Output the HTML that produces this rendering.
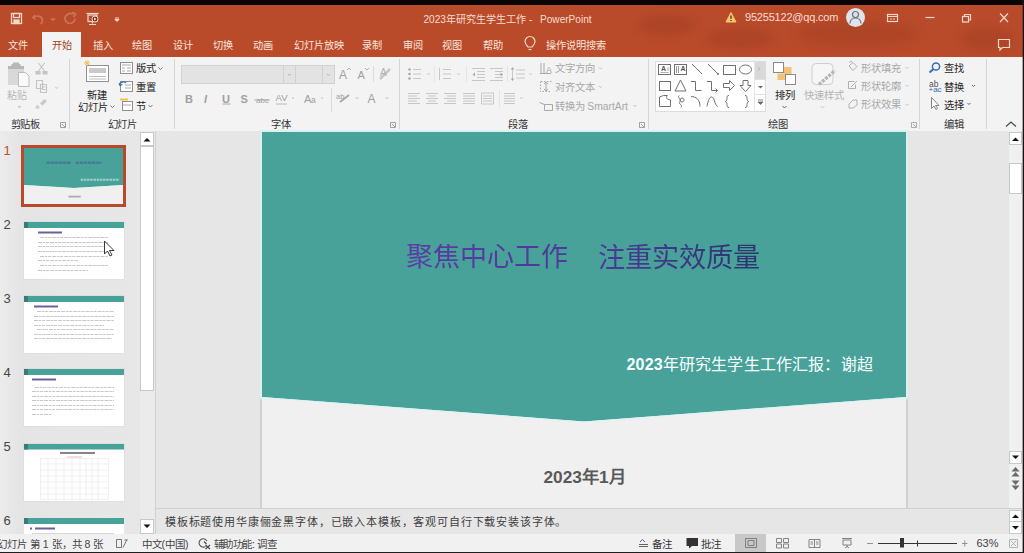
<!DOCTYPE html>
<html lang="zh-CN">
<head>
<meta charset="utf-8">
<style>
*{box-sizing:border-box;margin:0;padding:0}
html,body{width:1024px;height:553px;overflow:hidden}
body{position:relative;background:#e6e6e6;font-family:"Liberation Sans",sans-serif;color:#262626}
.a{position:absolute}
.t{position:absolute;white-space:nowrap;line-height:1}
svg{position:absolute;overflow:visible}
/* title bar */
#blk{left:0;top:0;width:1024px;height:5px;background:#0a0505}
#org{left:0;top:5px;width:1024px;height:52px;background:#b94b2b}
.tb{color:#f7dccf;font-size:10.1px}
.tab{color:#fbe6dc;font-size:10.2px;top:41px}
/* ribbon */
#rib{left:0;top:57px;width:1024px;height:74px;background:#f3f3f3}
.rsep{position:absolute;top:59px;width:1px;height:70px;background:#d6d6d6}
.lbl{font-size:10.3px;color:#333;top:120px}
.rt{font-size:10.3px;color:#262626}
.dim{color:#a8a8a8}
.dd{position:absolute;width:5px;height:3px}
</style>
</head>
<body>
<div class="a" id="blk"></div>
<div class="a" id="org"></div>
<div class="a" style="left:0;top:5px;width:1022px;height:52px;overflow:hidden">
<div class="a" style="left:637px;top:9px;width:60px;height:22px;border-radius:50%;background:#9a3a20;opacity:.35;filter:blur(5px)"></div>
<div class="a" style="left:705px;top:22px;width:70px;height:22px;border-radius:50%;background:#9a3a20;opacity:.35;filter:blur(5px)"></div>
<div class="a" style="left:795px;top:16px;width:125px;height:26px;border-radius:50%;background:#9a3a20;opacity:.35;filter:blur(6px)"></div>
<div class="a" style="left:960px;top:22px;width:55px;height:24px;border-radius:50%;background:#9a3a20;opacity:.35;filter:blur(5px)"></div>
</div>

<!-- quick access -->
<svg style="left:0;top:0" width="130" height="32">
  <g fill="none" stroke="#f6d8cb" stroke-width="1.3">
    <rect x="11.5" y="13.5" width="10" height="10"/>
    <rect x="13.5" y="13.5" width="6" height="4"/>
    <rect x="14" y="20" width="5" height="3.5" fill="#f6d8cb"/>
  </g>
  <g fill="none" stroke="#c97558" stroke-width="1.7">
    <path d="M35 15 l-2 2.5 l2.5 1.5 M33.5 17.5 c4-3 9-1 9 3 c0 2-1 3-2 3.5"/>
    <path d="M51 18.5 l2 1.5 l2-1.5"/>
    <path d="M73 14 c-4-2-8 1-8 4.5 c0 3 2.5 5 5 5 c3 0 5-2.5 5-5 M72 12.5 l3.5 1.5 l-2 3"/>
  </g>
  <g fill="none" stroke="#f6d8cb" stroke-width="1.2">
    <path d="M86.5 13.5 h12"/>
    <rect x="88" y="15" width="9" height="6.5"/>
    <path d="M92.5 21.5 v2 M89 24.5 h7"/>
    <circle cx="95" cy="19" r="3" fill="#7a3018" stroke="#f6d8cb" stroke-width="1"/><path d="M94.2 17.6 l2.2 1.4 l-2.2 1.4 z" fill="#fff" stroke="none"/>
  </g>
  <path d="M115 18 h4 M115 19.5 l2 2 l2-2 z" stroke="#f6d8cb" stroke-width="1" fill="#f6d8cb"/>
</svg>

<div class="t tb" style="left:423.5px;top:14.5px">2023年研究生学生工作</div><div class="t tb" style="left:529px;top:14.5px">-</div><div class="t tb" style="left:540px;top:14.5px">PowerPoint</div>
<svg style="left:0;top:0" width="1024" height="32">
  <path d="M731 12.5 l5 9.5 h-10 z" fill="#f3c66a" stroke="#f3c66a" stroke-width="1" stroke-linejoin="round"/>
  <path d="M731 15.5 v3.3 M731 20 v0.9" stroke="#3a2a10" stroke-width="1.2"/>
  <circle cx="855.5" cy="17.5" r="9.5" fill="#dfe3ea"/>
  <circle cx="855.5" cy="14.5" r="3" fill="none" stroke="#6b7280" stroke-width="1.2"/>
  <path d="M850 23.5 c0-3.5 2.5-5.5 5.5-5.5 s5.5 2 5.5 5.5" fill="none" stroke="#6b7280" stroke-width="1.2"/>
  <g fill="none" stroke="#f6d8cb" stroke-width="1.2">
    <rect x="887.5" y="14.5" width="10" height="7"/>
    <path d="M887.5 16.5 h10 M890 19 h2 M893 19 h2"/>
    <path d="M925.5 17.5 h9"/>
    <rect x="962.5" y="16.5" width="6" height="5.5"/>
    <path d="M964.5 16.5 v-2 h6 v5.5 h-1.8"/>
    <path d="M1000 13.5 l8 8.5 M1008 13.5 l-8 8.5"/>
  </g>
</svg>
<div class="t tb" style="left:745px;top:11.5px;font-size:11px;letter-spacing:-0.2px">95255122@qq.com</div>

<!-- tabs -->
<div class="a" style="left:42px;top:32px;width:39px;height:25px;background:#f3f3f3"></div>
<div class="t tab" style="left:7.5px">文件</div>
<div class="t tab" style="left:52px;color:#a23f24">开始</div>
<div class="t tab" style="left:92.5px">插入</div>
<div class="t tab" style="left:132px">绘图</div>
<div class="t tab" style="left:172.5px">设计</div>
<div class="t tab" style="left:212.5px">切换</div>
<div class="t tab" style="left:253px">动画</div>
<div class="t tab" style="left:293.5px">幻灯片放映</div>
<div class="t tab" style="left:362px">录制</div>
<div class="t tab" style="left:402.5px">审阅</div>
<div class="t tab" style="left:442px">视图</div>
<div class="t tab" style="left:483px">帮助</div>
<svg style="left:0;top:0" width="1024" height="57">
  <g fill="none" stroke="#f6d8cb" stroke-width="1.2">
    <path d="M528 47 c-2-2-3-3.5-3-5.5 a5 5 0 0 1 10 0 c0 2-1 3.5-3 5.5 z"/>
    <path d="M528.5 49.5 h3"/>
    <path d="M998.5 39.5 h11 v8 h-7 l-2.5 2.5 v-2.5 h-1.5 z"/>
  </g>
</svg>
<div class="t tab" style="left:546px">操作说明搜索</div>

<!-- ribbon -->
<div class="a" id="rib"></div>

<!-- separators -->
<div class="rsep" style="left:69px"></div>
<div class="rsep" style="left:174px"></div>
<div class="rsep" style="left:399px"></div>
<div class="rsep" style="left:648px"></div>
<div class="rsep" style="left:919px"></div>
<div class="rsep" style="left:986px"></div>

<!-- clipboard -->
<svg style="left:0;top:0" width="70" height="131">
  <rect x="8" y="68" width="16" height="17" fill="#d9d9d9"/>
  <path d="M8 69 h16 v-3 h-3.5 v-2 h-1.5 v-1.5 h-6 v1.5 h-1.5 v2 h-3.5 z" fill="#b8b8b8"/>
  <path d="M18.5 72.5 h7 l3.5 3.5 v10.5 h-10.5 z" fill="#fafafa" stroke="#bdbdbd" stroke-width="1"/>
  <g fill="none" stroke="#c4c4c4" stroke-width="1.1">
    <path d="M38.5 63 l6 8 M44.5 63 l-6 8"/>
    <path d="M36 71.5 h4 v2.5 h-4 z M43 71.5 h4 v2.5 h-4 z" fill="#c4c4c4"/>
    <path d="M36.5 80.5 h6 v8 h-6 z M40.5 84.5 h6 v8 h-6 z M42 87 h3.5 M42 89.5 h3.5" fill="#f3f3f3"/>
    <path d="M55 87 l1.5 1.5 l1.5-1.5" stroke="#d6d6d6"/>
    <path d="M18 106 l1.5 1.5 l1.5-1.5" stroke="#c8c8c8"/>
  </g>
  <g fill="#c8c8c8"><path d="M44.5 99 l2.5 2 l-4.5 4.5 l-2.5-2 z"/><path d="M37 104.5 l3 2.5 l-1.5 2 l-3.5-1 z" fill="#d0d0d0"/></g>
  <path d="M60.5 122.5 h5 v5 h-5 z M62 124 l3 3" fill="none" stroke="#8a8a8a" stroke-width="0.8"/>
</svg>
<div class="t rt dim" style="left:6.5px;top:90.5px;font-size:10px;color:#b8b8b8">粘贴</div>
<div class="t lbl" style="left:10.5px;letter-spacing:-0.5px">剪贴板</div>

<!-- slides -->
<svg style="left:0;top:0" width="175" height="131">
  <rect x="86.5" y="65.5" width="22" height="16" fill="#fff" stroke="#8f8f8f"/>
  <rect x="89" y="68" width="17" height="5" fill="#c9c9c9"/>
  <path d="M89 76.5 h17 M89 79 h17" stroke="#bcbcbc"/>
  <path d="M87 60 v6 M84 63 h6 M85 61 l4 4 M89 61 l-4 4" stroke="#f2c14e" stroke-width="1"/>
  <path d="M110.5 105.5 l2 2 l2-2" fill="none" stroke="#666" stroke-width="0.9"/>
  <g fill="#fff" stroke="#8f8f8f">
    <rect x="120.5" y="62.5" width="12" height="11"/>
    <rect x="120.5" y="81.5" width="12" height="10"/>
    <rect x="122.5" y="101.5" width="10" height="9"/>
  </g>
  <path d="M122 65 h9 M122 68 h3 M127 68 h4 M122 71 h3 M127 71 h4" stroke="#aaa"/>
  <path d="M120 85 c0-3 4-4 6-2 M119 83 l1 2.5 l2.5-1" fill="none" stroke="#3b6fb6" stroke-width="1.1"/>
  <path d="M125 85 h6 M125 88 h6" stroke="#aaa"/>
  <path d="M120 99.5 h8" stroke="#f2c14e" stroke-width="2"/>
  <path d="M123 105 h8" stroke="#aaa"/>
  <path d="M158.5 67.5 l2 2 l2-2 M148.5 105 l2 2 l2-2" fill="none" stroke="#666" stroke-width="0.9"/>
</svg>
<div class="t rt" style="left:87px;top:90.5px">新建</div>
<div class="t rt" style="left:77.5px;top:103px">幻灯片</div>
<div class="t rt" style="left:135.5px;top:64px">版式</div>
<div class="t rt" style="left:135.5px;top:83px">重置</div>
<div class="t rt" style="left:135.5px;top:102px">节</div>
<div class="t lbl" style="left:107.5px;letter-spacing:-0.5px">幻灯片</div>

<!-- font -->
<div class="a" style="left:181px;top:65px;width:154px;height:19px;background:#e3e3e3;border:1px solid #d2d2d2"></div>
<div class="a" style="left:283px;top:65px;width:1px;height:19px;background:#d2d2d2"></div>
<div class="a" style="left:295px;top:65px;width:1px;height:19px;background:#d2d2d2"></div>
<div class="a" style="left:322px;top:65px;width:1px;height:19px;background:#d2d2d2"></div>
<svg style="left:0;top:0" width="400" height="131">
  <g fill="none" stroke="#b0b0b0" stroke-width="0.9">
    <path d="M288 74 l1.5 1.5 l1.5-1.5 M327 74 l1.5 1.5 l1.5-1.5"/>
  </g>
  <g fill="#a0a0a0" font-family="Liberation Sans" >
    <text x="185" y="102.5" font-size="11" font-weight="bold">B</text>
    <text x="204" y="102.5" font-size="11" font-style="italic" font-weight="bold">I</text>
    <text x="222" y="102.5" font-size="11" font-weight="bold">U</text>
    <text x="240.5" y="102.5" font-size="11" font-weight="bold">S</text>
    <text x="256" y="102.5" font-size="8">abc</text>
    <text x="275.5" y="101" font-size="9.5">AV</text>
    <text x="304" y="102.5" font-size="11">A</text>
    <text x="311" y="102.5" font-size="8.5">a</text>
    <text x="339" y="79" font-size="12">A</text>
    <text x="357.5" y="79" font-size="11">A</text>
    <text x="367.5" y="103" font-size="12">A</text>
    <text x="336" y="99" font-size="7.5">ab</text>
  </g>
  <g fill="none" stroke="#a8a8a8" stroke-width="1">
    <path d="M222.5 104 h8"/>
    <path d="M254.5 100 h15"/>
    <path d="M276 104 h11" stroke-width="0.8"/>
    <path d="M347 70 l2-2 l2 2 M365 68 l2 2 l2-2" stroke-width="0.9"/>
    <path d="M340 102 l9-7" stroke-width="2"/>
    <path d="M380 79 l10-10" stroke-width="2.5" stroke="#c6c6c6"/>
    <path d="M292 98 h2 M321 98 h2 M355.5 98 h3 M385.5 98 h3" stroke="#c0c0c0"/>
  </g>
  <text x="380" y="76" font-size="10" fill="#b0b0b0" font-family="Liberation Sans">A</text>
  <path d="M373.5 66 v16 M331.5 88 v24" stroke="#dadada"/>
  <path d="M390.5 122.5 h5 v5 h-5 z M392 124 l3 3" fill="none" stroke="#8a8a8a" stroke-width="0.8"/>
</svg>
<div class="t lbl" style="left:270.5px">字体</div>

<!-- paragraph -->
<svg style="left:0;top:0" width="660" height="131">
  <g fill="#a8a8a8">
    <circle cx="409.5" cy="69.5" r="1.3"/><circle cx="409.5" cy="74" r="1.3"/><circle cx="409.5" cy="78.5" r="1.3"/>
  </g>
  <g stroke="#c2c2c2" stroke-width="0.9" fill="none">
    <path d="M413 69.5 h8 M413 74 h8 M413 78.5 h8"/>
    <path d="M439.5 68 v12 M443 69.5 h8 M443 74 h8 M443 78.5 h8"/>
    <path d="M472 68.5 h13 M477 71.5 h8 M477 74.5 h8 M477 77.5 h8 M472 80.5 h13"/>
    <path d="M490 68.5 h13 M495 71.5 h8 M495 74.5 h8 M495 77.5 h8 M490 80.5 h13"/>
    <path d="M516 70 h9 M516 74 h9 M516 78 h9 M512.5 68 v12"/>
    <path d="M427 74 h3 M457 74 h3 M529 74 h3" stroke="#c8c8c8"/>
    <path d="M408 93.5 h12 M408 96 h9 M408 98.5 h12 M408 101 h9 M408 103.5 h12"/>
    <path d="M426 93.5 h12 M428 96 h8 M426 98.5 h12 M428 101 h8 M426 103.5 h12"/>
    <path d="M444 93.5 h12 M447 96 h9 M444 98.5 h12 M447 101 h9 M444 103.5 h12"/>
    <path d="M463 93.5 h12 M463 96 h12 M463 98.5 h12 M463 101 h12 M463 103.5 h12"/>
    <path d="M481.5 93 h12 v11 h-12 z M483 96 h9 M483 98.5 h9 M483 101 h9"/>
    <path d="M504 93.5 h11 M504 96 h11 M504 98.5 h11 M504 101 h11 M504 103.5 h11"/>
    <path d="M520 98 h3" stroke="#c8c8c8"/>
  </g>
  <g fill="#a8a8a8"><path d="M472.5 74.5 l2.5-2 v4 z M503 74.5 l-2.5-2 v4 z"/><path d="M512.5 67 l-1.8 2.5 h3.6 z M512.5 81 l-1.8-2.5 h3.6 z"/></g>
  <path d="M434.5 66 v16 M466.5 66 v16 M507.5 66 v16 M499.5 90 v18" stroke="#e4e4e4"/>
  <g stroke="#a8a8a8" fill="none" stroke-width="1">
    <path d="M541 63 v10 M544 63 v10 M540 73.5 h11"/>
    <path d="M540.5 81.5 v10 h11 M551.5 81.5 h-11" stroke-dasharray="1.5 1.5"/>
    <path d="M546 82 v9 M544 84 l2-2 l2 2 M544 89 l2 2 l2-2"/>
    <path d="M544.5 104.5 h8 v6 h-8 z"/>
    <path d="M539.5 102.5 l5 2"/>
    <path d="M599 67.5 l1.5 1.5 l1.5-1.5 M599 86 l1.5 1.5 l1.5-1.5 M633.5 105 l1.5 1.5 l1.5-1.5" stroke="#c0c0c0"/>
  </g>
  <text x="546" y="72.5" font-size="9" fill="#a8a8a8" font-family="Liberation Sans">A</text>
  <path d="M639.5 122.5 h5 v5 h-5 z M641 124 l3 3" fill="none" stroke="#8a8a8a" stroke-width="0.8"/>
</svg>
<div class="t rt dim" style="left:554.5px;top:64px">文字方向</div>
<div class="t rt dim" style="left:554.5px;top:83px">对齐文本</div>
<div class="t rt dim" style="left:554.5px;top:101.5px">转换为 SmartArt</div>
<div class="t lbl" style="left:507.5px">段落</div>

<!-- drawing -->
<div class="a" style="left:655px;top:61px;width:111px;height:51px;background:#fff;border:1px solid #dcdcdc"></div>
<div class="a" style="left:754px;top:62px;width:11px;height:17px;background:#d9d9d9"></div>
<div class="a" style="left:754px;top:62px;width:1px;height:49px;background:#e6e6e6"></div>
<div class="a" style="left:755px;top:79px;width:10px;height:1px;background:#e0e0e0"></div>
<div class="a" style="left:755px;top:94px;width:10px;height:1px;background:#e0e0e0"></div>
<svg style="left:0;top:0" width="1024" height="131">
  <g fill="none" stroke="#707070" stroke-width="1">
    <rect x="658.5" y="64.5" width="12" height="10"/>
    <path d="M660.5 72.5 h8" stroke="#b0b0b0"/>
    <rect x="674.5" y="64.5" width="12" height="10"/>
    <path d="M676.5 66 v7 M678.5 66 v7" stroke="#999"/>
    <path d="M692 64 l10 10"/>
    <path d="M708 64 l10 10"/>
    <rect x="723.5" y="65.5" width="12" height="9"/>
    <ellipse cx="745.5" cy="69.5" rx="6" ry="4.5"/>
    <rect x="659.5" y="81.5" width="11" height="9"/>
    <path d="M680.5 80 l-5.5 11 h11 z"/>
    <path d="M691 81.5 h4.5 v9 h6"/>
    <path d="M707 81.5 h4.5 v9 h6 M715.5 88.5 l2 2 l-2 2"/>
    <path d="M723.5 83.5 h6 v-3 l5 5 l-5 5 v-3 h-6 z"/>
    <path d="M743 80.5 h5 v5 h3 l-5.5 6 l-5.5-6 h3 z"/>
    <path d="M659.5 97 l4-1.5 h4 c-2 2-1 4 3 4.5 v6.5 h-11 z"/>
    <path d="M679 95.5 c-2 3 3 3 1 6 c-2 3 3 3 1 6 M682 102 a2 2 0 1 1 0.1 0"/>
    <path d="M691 96.5 c5 0 9 3 9 10"/>
    <path d="M707 106.5 c2-12 6-12 8-4 c1 3 2 4 3 4"/>
    <path d="M729 95.5 c-2 0-2 1-2 3 c0 2-1 3-2 3 c1 0 2 1 2 3 c0 2 0 3 2 3"/>
    <path d="M745 95.5 c2 0 2 1 2 3 c0 2 1 3 2 3 c-1 0-2 1-2 3 c0 2 0 3-2 3"/>
  </g>
  <circle cx="718" cy="74" r="1" fill="#707070"/>
  <text x="661" y="71" font-size="7" fill="#555" font-family="Liberation Sans" font-weight="bold">A</text>
  <path d="M667 68 h2.5 M667 70 h2.5" stroke="#999" stroke-width="0.8"/>
  <text x="680.5" y="71" font-size="7" fill="#555" font-family="Liberation Sans" font-weight="bold">A</text>
  <path d="M758 67 l2 2 l-2 2" fill="none" stroke="#b0b0b0" stroke-width="0.8"/>
  <path d="M758 86 h5 l-2.5 2.5 z" fill="#6a6a6a"/>
  <path d="M758 100 h5 M758 102 h5 l-2.5 2.5 z" fill="#6a6a6a" stroke="#6a6a6a" stroke-width="0.8"/>
  <!-- arrange -->
  <rect x="784" y="67" width="7.5" height="7" fill="#f3c276"/>
  <rect x="777.5" y="73.5" width="7.5" height="6.5" fill="#f3c276"/>
  <rect x="773.5" y="62.5" width="10" height="10" fill="#fff" stroke="#8a8a8a"/>
  <rect x="785.5" y="74.5" width="10" height="10" fill="#fff" stroke="#8a8a8a"/>
  <path d="M782.5 106 l2 2 l2-2" fill="none" stroke="#555" stroke-width="0.9"/>
  <!-- quick styles -->
  <rect x="812" y="63.5" width="21" height="21" rx="4" fill="#f6f6f6" stroke="#cfcfcf"/>
  <path d="M819 84.5 l16-14" stroke="#b5b5b5" stroke-width="3.2" stroke-dasharray="3 1.2"/>
  <path d="M820.5 106 l2 2 l2-2" fill="none" stroke="#c6c6c6" stroke-width="0.9"/>
  <g fill="none" stroke="#b0b0b0" stroke-width="1">
    <path d="M849 66 l4-3.5 l4 4 l-4 4 z M849.5 63 c0-2 2-2 3-1"/>
    <path d="M848.5 81.5 h6 M848.5 81.5 v7 h7 v-4" />
    <path d="M851 87 l6-6"/>
    <path d="M849 104 l4-4 h4 v5 l-4 3 h-4 z"/>
    <path d="M905.5 67 l1.5 1.5 l1.5-1.5 M905.5 85 l1.5 1.5 l1.5-1.5 M905.5 104 l1.5 1.5 l1.5-1.5" stroke="#c8c8c8"/>
  </g>
  <path d="M911.5 122.5 h5 v5 h-5 z M913 124 l3 3" fill="none" stroke="#9a9a9a" stroke-width="0.8"/>
  <!-- editing -->
  <circle cx="936" cy="66.5" r="3.6" fill="none" stroke="#2f6db5" stroke-width="1.5"/>
  <path d="M933.5 69 l-4 3.5" stroke="#2f6db5" stroke-width="2"/>
  <text x="929" y="86.5" font-size="8.5" fill="#555" font-family="Liberation Sans">ab</text>
  <text x="928.5" y="92" font-size="8" fill="#2f6db5" font-family="Liberation Sans">+ac</text>
  <path d="M931.5 97.5 v11 l2.5-2.5 l2 3.5 l1.5-1 l-2-3 h3.5 z" fill="#fff" stroke="#777" stroke-width="0.9"/>
  <path d="M972 85 l1.5 1.5 l1.5-1.5 M967.5 103 l1.5 1.5 l1.5-1.5" fill="none" stroke="#555" stroke-width="0.9"/>
  <path d="M1006 126.5 l5-4.5 l5 4.5" fill="none" stroke="#444" stroke-width="1.1"/>
</svg>
<div class="t rt" style="left:774.5px;top:90.5px;color:#222">排列</div>
<div class="t rt dim" style="left:803.5px;top:90.5px;color:#b4b4b4">快速样式</div>
<div class="t rt dim" style="left:860.5px;top:63.5px">形状填充</div>
<div class="t rt dim" style="left:860.5px;top:81.5px">形状轮廓</div>
<div class="t rt dim" style="left:860.5px;top:99.5px">形状效果</div>
<div class="t lbl" style="left:767.5px">绘图</div>
<div class="t rt" style="left:944px;top:64px">查找</div>
<div class="t rt" style="left:944px;top:82.5px">替换</div>
<div class="t rt" style="left:944px;top:100.5px">选择</div>
<div class="t lbl" style="left:944px">编辑</div>

<!-- ===== main area ===== -->
<div class="a" style="left:0;top:131px;width:140px;height:403px;background:linear-gradient(90deg,#ececec 0,#e4e4e4 20px,#e6e6e6 60px,#e7e7e7 140px)"></div>
<!-- left scrollbar -->
<div class="a" style="left:140px;top:131px;width:15px;height:403px;background:#ebebeb"></div>
<div class="a" style="left:140px;top:132px;width:14px;height:14px;background:#fff;border:1px solid #c8c8c8"></div>
<div class="a" style="left:140px;top:146px;width:14px;height:245px;background:#fff;border:1px solid #c8c8c8"></div>
<div class="a" style="left:140px;top:519px;width:14px;height:15px;background:#fff;border:1px solid #c8c8c8"></div>
<div class="a" style="left:155px;top:131px;width:1px;height:403px;background:#d0d0d0"></div>
<svg style="left:0;top:0" width="160" height="553">
  <path d="M143.5 141.5 l3.5-3.5 l3.5 3.5 z" fill="#111"/>
  <path d="M143.5 524.5 l3.5 3.5 l3.5-3.5 z" fill="#111"/>
</svg>

<!-- thumbnails -->
<div class="t" style="left:3.5px;top:143.5px;font-size:13px;color:#b5532f">1</div>
<div class="t" style="left:3.5px;top:217.5px;font-size:13px;color:#444">2</div>
<div class="t" style="left:3.5px;top:291.5px;font-size:13px;color:#444">3</div>
<div class="t" style="left:3.5px;top:366px;font-size:13px;color:#444">4</div>
<div class="t" style="left:3.5px;top:439.5px;font-size:13px;color:#444">5</div>
<div class="t" style="left:3.5px;top:513.5px;font-size:13px;color:#444">6</div>

<div class="a" style="left:21px;top:145px;width:105px;height:62px;border:3px solid #b84a2b;background:#f0f0f0;overflow:hidden">
  <svg style="left:0;top:0" width="99" height="56">
    <path d="M0 0 H99 V37 L50 40 L0 37 Z" fill="#48a29a"/>
    <path d="M0 37.5 L50 40.5 L99 37.5" fill="none" stroke="#dff7f5" stroke-width="0.8"/>
    <path d="M22.7 14.8 h24.3 M51.6 14.8 h26" stroke="#40508a" stroke-width="2.6" stroke-dasharray="3.5 0.6" opacity="0.45"/>
    <path d="M56.7 31.7 h38.6" stroke="#e8fbfa" stroke-width="2" stroke-dasharray="2.5 0.7" opacity="0.55"/>
    <path d="M44.4 48.6 h12.3" stroke="#777" stroke-width="1.8" opacity="0.55"/>
  </svg>
</div>

<div class="a" style="left:24px;top:221.5px;width:100px;height:57px;background:#fff;box-shadow:0 0 1px #bbb;overflow:hidden">
  <svg style="left:0;top:0" width="100" height="57">
    <rect x="0" y="0" width="100" height="6" fill="#48a29a"/><rect x="0" y="0" width="4" height="6" fill="#3a7a74"/>
    <path d="M14 10.5 h24" stroke="#3b2a7a" stroke-width="2" opacity="0.75"/>
    <g stroke="#9a9a9a" stroke-width="1" stroke-dasharray="4 0.8 2.5 0.8 3 1" opacity="0.55">
      <path d="M16 15.5 h68 M14 20.5 h70 M14 24.5 h70 M14 29.5 h70 M16 34.5 h68 M14 38.5 h40 M16 43.5 h68 M14 48.5 h50"/>
    </g>
  </svg>
</div>
<svg style="left:0;top:0" width="130" height="300">
  <path d="M104.5 241 v13 l3-3 l2.5 5 l2-1 l-2.5-4.5 h4.5 z" fill="#fff" stroke="#222" stroke-width="0.9"/>
</svg>

<div class="a" style="left:24px;top:296px;width:100px;height:57px;background:#fff;box-shadow:0 0 1px #bbb;overflow:hidden">
  <svg style="left:0;top:0" width="100" height="57">
    <rect x="0" y="0" width="100" height="6" fill="#48a29a"/><rect x="0" y="0" width="4" height="6" fill="#3a7a74"/>
    <path d="M10 10.5 h24" stroke="#3b2a7a" stroke-width="2" opacity="0.75"/>
    <g stroke="#9a9a9a" stroke-width="1" stroke-dasharray="4 0.8 2.5 0.8 3 1" opacity="0.55">
      <path d="M13 15.5 h77 M10 20.5 h80 M10 24.5 h80 M10 29.5 h70 M13 33.5 h77 M10 38.5 h80 M10 42.5 h78"/>
    </g>
  </svg>
</div>

<div class="a" style="left:24px;top:369px;width:100px;height:57px;background:#fff;box-shadow:0 0 1px #bbb;overflow:hidden">
  <svg style="left:0;top:0" width="100" height="57">
    <rect x="0" y="0" width="100" height="6" fill="#48a29a"/><rect x="0" y="0" width="4" height="6" fill="#3a7a74"/>
    <path d="M8 10.5 h24" stroke="#3b2a7a" stroke-width="2" opacity="0.75"/>
    <g stroke="#9a9a9a" stroke-width="1" stroke-dasharray="4 0.8 2.5 0.8 3 1" opacity="0.55">
      <path d="M11 18.5 h79 M8 22.5 h82 M8 27.5 h82 M8 31.5 h82 M8 36.5 h82 M8 40.5 h82 M8 45.5 h20"/>
    </g>
  </svg>
</div>

<div class="a" style="left:24px;top:443.5px;width:100px;height:57px;background:#fff;box-shadow:0 0 1px #bbb;overflow:hidden">
  <svg style="left:0;top:0" width="100" height="57">
    <rect x="0" y="0" width="100" height="5.5" fill="#48a29a"/><rect x="0" y="0" width="4" height="5.5" fill="#3a7a74"/>
    <path d="M36 9 h35" stroke="#333" stroke-width="1.3" opacity="0.8"/>
    <path d="M43 13 h15" stroke="#e0a0a0" stroke-width="0.7"/>
    <g stroke="#e2e2e2" stroke-width="0.5" fill="none">
      <rect x="16.5" y="14.5" width="68" height="41"/>
      <path d="M24 14.5 v41 M32 14.5 v41 M40 14.5 v41 M48 14.5 v41 M56 14.5 v41 M62 14.5 v41 M68 14.5 v41 M74 14.5 v41"/>
      <path d="M16.5 20 h68 M16.5 26 h68 M16.5 32 h68 M16.5 38 h68 M16.5 44 h68 M16.5 50 h68"/>
    </g>
  </svg>
</div>

<div class="a" style="left:24px;top:517.5px;width:100px;height:16.5px;background:#fff;overflow:hidden">
  <svg style="left:0;top:0" width="100" height="17">
    <rect x="0" y="0" width="100" height="6" fill="#48a29a"/><rect x="0" y="0" width="4" height="6" fill="#3a7a74"/>
    <path d="M6 10.5 h2 M11 10.5 h20" stroke="#3b2a7a" stroke-width="2" opacity="0.75"/>
    <path d="M8 15.5 h82" stroke="#bbb" stroke-width="1" opacity="0.6"/>
  </svg>
</div>

<!-- slide view -->
<div class="a" style="left:156px;top:131px;width:853px;height:377px;background:#e6e6e6"></div>
<div class="a" style="left:260px;top:130px;width:648px;height:378px;background:linear-gradient(180deg,#d6f3f1 0,#d6f3f1 268px,#d0d0d0 270px)"></div>
<div class="a" style="left:262px;top:132px;width:644px;height:376px;background:#f0f0f0;overflow:hidden">
  <svg style="left:0;top:0" width="644" height="376">
    <path d="M0 0 H644 V265 L322 289.5 L0 265 Z" fill="#48a29a"/>
    <path d="M0 265.5 L322 290 L644 265.5" fill="none" stroke="#d8f6f3" stroke-width="1"/>
  </svg>
</div>
<div class="t" style="left:405.5px;top:244px;font-size:27px;color:#4e3a98;background:linear-gradient(90deg,#5a3ca6,#4d3a98);-webkit-background-clip:text;background-clip:text;-webkit-text-fill-color:transparent">聚焦中心工作</div>
<div class="t" style="left:598px;top:244px;font-size:27.2px;color:#3a3582;background:linear-gradient(90deg,#4d3a98,#2c356e);-webkit-background-clip:text;background-clip:text;-webkit-text-fill-color:transparent">注重实效质量</div>
<div class="t" style="left:626.5px;top:357px;font-size:16px;letter-spacing:0.17px;color:#f8ffff;font-weight:normal;font-family:'Liberation Serif',serif"><span style="font-family:'Liberation Sans',sans-serif;font-weight:bold">2023</span>年研究生学生工作汇报：谢超</div>
<div class="t" style="left:543.5px;top:469px;font-size:17.3px;color:#595959;font-weight:bold">2023年1月</div>

<!-- right scrollbar -->
<div class="a" style="left:1009px;top:131px;width:13px;height:377px;background:#f0f0f0"></div>
<div class="a" style="left:1009px;top:132px;width:13px;height:13px;background:#fff;border:1px solid #c8c8c8"></div>
<div class="a" style="left:1009px;top:162.5px;width:13px;height:31px;background:#fff;border:1px solid #c8c8c8"></div>
<div class="a" style="left:1009px;top:451px;width:13px;height:13px;background:#fff;border:1px solid #c8c8c8"></div>
<svg style="left:0;top:0" width="1024" height="553">
  <path d="M1012 141 l3.5-3.5 l3.5 3.5 z" fill="#111"/>
  <path d="M1012 455.5 l3.5 3.5 l3.5-3.5 z" fill="#111"/>
  <g fill="#6a6a6a">
    <path d="M1011.5 471.5 l4-4.5 l4 4.5 z M1011.5 476.5 l4-4.5 l4 4.5 z"/>
    <path d="M1011.5 480.5 l4 4.5 l4-4.5 z M1011.5 485.5 l4 4.5 l4-4.5 z"/>
  </g>
</svg>

<!-- notes -->
<div class="a" style="left:156px;top:508px;width:866px;height:1px;background:#cfcfcf"></div>
<div class="a" style="left:156px;top:509px;width:866px;height:25px;background:#e6e6e6"></div>
<div class="t" style="left:165px;top:516.5px;font-size:11px;letter-spacing:0.83px;color:#404040">模板标题使用华康俪金黑字体，已嵌入本模板，客观可自行下载安装该字体。</div>
<div class="a" style="left:1009px;top:510px;width:13px;height:12px;background:#fff;border:1px solid #c8c8c8"></div>
<div class="a" style="left:1009px;top:521px;width:13px;height:13px;background:#fff;border:1px solid #c8c8c8"></div>
<svg style="left:0;top:0" width="1024" height="553">
  <path d="M1012 518 l3.5-3.5 l3.5 3.5 z" fill="#111"/>
  <path d="M1012 526 l3.5 3.5 l3.5-3.5 z" fill="#111"/>
</svg>

<!-- status bar -->
<div class="a" style="left:0;top:534px;width:1022px;height:18px;background:#f1f1f1"></div>
<div class="a" style="left:0;top:552px;width:1024px;height:1px;background:#1e1e1e"></div>
<div class="a" style="left:734.5px;top:534px;width:31px;height:18px;background:#c8c8c8"></div>
<div class="t" style="left:-3px;top:538.5px;font-size:10.5px;color:#444">幻灯片 第 1 张，共 8 张</div>
<div class="t" style="left:141.5px;top:538.5px;font-size:10.5px;color:#444">中文(中国)</div>
<div class="t" style="left:213.5px;top:538.5px;font-size:10.5px;color:#444;letter-spacing:-0.35px">辅助功能: 调查</div>
<div class="t" style="left:652px;top:538.5px;font-size:10.5px;color:#333">备注</div>
<div class="t" style="left:700.5px;top:538.5px;font-size:10.5px;color:#333">批注</div>
<div class="t" style="left:976.5px;top:538px;font-size:11px;color:#444">63%</div>
<svg style="left:0;top:0" width="1024" height="553">
  <g fill="none" stroke="#666" stroke-width="0.9">
    <path d="M116.5 539.5 h5 v8 h-5 z M123 547.5 l4-8 M124.5 540 h3"/>
    <path d="M207 541 a4.2 4.2 0 1 0 -1.5 5.5" stroke="#555" stroke-width="1.1"/><path d="M204 541.5 l2.5 2.5 M205.5 545 l4.5 4 M210 545 l-4.5 4" stroke="#444" stroke-width="1.1"/>
    <path d="M640 542 l2.5-2.5 l2.5 2.5 M639 544.5 h9 M639 546.5 h9" stroke="#555"/>
    <path d="M745.5 538.5 h11 v9 h-11 z M748 540.5 h6 v5 h-6 z" stroke="#777"/>
    <path d="M776.5 538.5 h5 v4 h-5 z M783.5 538.5 h5 v4 h-5 z M776.5 544 h5 v4 h-5 z M783.5 544 h5 v4 h-5 z" stroke="#777"/>
    <path d="M809 539.5 h11 v8 h-11 z M814.5 539.5 v8 M810.5 542 h2.5 M810.5 544 h2.5 M816 542 h2.5 M816 544 h2.5" stroke="#777"/>
    <path d="M842 538.5 h10 M843 540 h8 v5 h-8 z M847 545 v2 M845 548 l2-1.5 l2 1.5" stroke="#777"/>
    <path d="M867 543.5 h6 M962 543.5 h5.5 M964.75 540.5 v6" stroke="#888"/>
    <path d="M1009.5 539.5 h8 v8 h-8 z M1011 541 l5 5 M1016 541 l-5 5" stroke="#aaa"/>
  </g>
  <path d="M686.5 538 h11.5 v8 h-6 l-3 2.5 v-2.5 h-2.5 z" fill="#333"/>
  <path d="M878 543.5 h79" stroke="#333" stroke-width="1.2"/>
  <rect x="900" y="538" width="4" height="9.5" fill="#333"/>
  <path d="M917.5 540.5 v6" stroke="#333" stroke-width="1"/>
</svg>

<div class="a" style="left:1022px;top:0;width:1px;height:553px;background:rgba(40,30,25,.35)"></div><div class="a" style="left:1023px;top:0;width:1px;height:553px;background:#1a1410"></div>

</body>
</html>
